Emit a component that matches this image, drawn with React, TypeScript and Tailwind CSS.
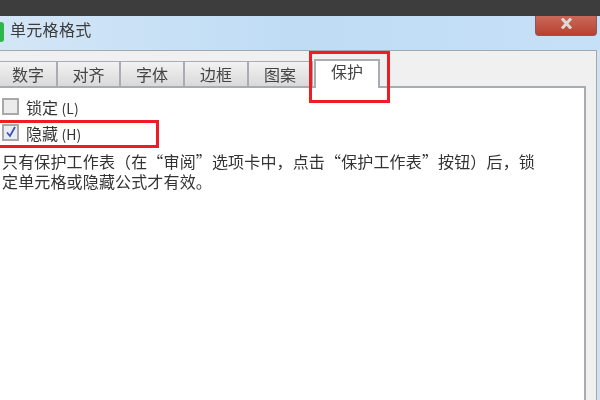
const cjk = "font-['Noto_Sans_CJK_SC','Liberation_Sans',sans-serif]";

const tabs = [
  { label: "数字", w: "w-[58px]" },
  { label: "对齐", w: "w-[63px]" },
  { label: "字体", w: "w-[64px]" },
  { label: "边框", w: "w-[64px]" },
  { label: "图案", w: "w-[64px]" },
];

export default function App() {
  return (
    <div className={`relative w-[600px] h-[400px] overflow-hidden bg-[#cfe3f5] ${cjk}`}>
      <div className="flex flex-col h-full blur-[0.6px]">
        <div className="h-[16px] shrink-0 bg-[#3d3d3d]" />

        {/* title bar */}
        <div className="relative h-[34px] shrink-0 flex items-center gap-[6px] bg-gradient-to-r from-[#d3e6f6] via-[#bfdcf5] to-[#c6e0f7]">
          <div className="w-[4px] h-[20px] mt-[-2px] rounded-r-[3px] bg-[#2fb84a]" />
          <span className="text-[16px] leading-[20px] mt-[-8px] tracking-[0.3px] text-[#3c3c3c]">单元格格式</span>
          <div className="absolute right-[3px] top-0 w-[62px] h-[20px] rounded-b-[4px] border border-t-0 border-[#8a5a50] bg-gradient-to-b from-[#c9695a] to-[#b8402f] flex items-start justify-center">
            <svg width="13" height="11" viewBox="0 0 13 11" className="mt-[2px]">
              <path d="M2 0.5 L11 10.5 M11 0.5 L2 10.5" stroke="#dcd9d6" strokeWidth="3" fill="none" />
            </svg>
          </div>
        </div>

        {/* dialog body */}
        <div className="flex-1 flex flex-col pt-[8px] pr-[10px] mr-[3px] bg-[#f0f0f0] border-t border-r border-[#a3a8ad]">
          <div className="flex items-end h-[27px] shrink-0 text-[16px] text-[#444444]">
            {tabs.map((t) => (
              <div
                key={t.label}
                className={`${t.w} h-[25px] flex items-center justify-center border-r-[2px] border-t border-[#a9adb1] bg-gradient-to-b from-[#f2f2f2] to-[#d9d9d9]`}
              >
                {t.label}
              </div>
            ))}
            <div className="w-[66px] h-[29px] ml-[1px] mb-[-2px] pb-[7px] z-10 flex items-center justify-center bg-white border-x-[2px] border-t-[2px] border-[#a9adb1]">
              保护
            </div>
          </div>

          <div className="flex-1 bg-white border-t-[2px] border-r-[2px] border-[#a9adb1] pt-[8px] text-[16px] leading-[20px] text-[#333333]">
            <div className="flex items-center h-[20px] pl-[2px] gap-[7px]">
              <span className="w-[17px] h-[17px] border-2 border-[#a8a8a8] bg-[#ececec]" />
              <span className="mt-[2px]">
                锁定 <span className="text-[14px]">(L)</span>
              </span>
            </div>
            <div className="flex items-center h-[20px] mt-[6px] pl-[2px] gap-[7px]">
              <span className="w-[17px] h-[17px] border-2 border-[#a8a8a8] bg-[#e8edf5] flex items-center justify-center">
                <svg width="12" height="12" viewBox="0 0 12 12">
                  <path d="M2 6.5 L5 10 L10 1" stroke="#3f51b0" strokeWidth="1.8" fill="none" />
                </svg>
              </span>
              <span className="mt-[3px]">
                隐藏 <span className="text-[14px]">(H)</span>
              </span>
            </div>
            <p className="mt-[9px] pl-[2px] w-[545px] tracking-[0.15px]">
              只有保护工作表（在“审阅”选项卡中，点击“保护工作表”按钮）后，锁定单元格或隐藏公式才有效。
            </p>
          </div>
        </div>
      </div>

      {/* red annotation boxes */}
      <div className="absolute left-[309px] top-[51px] w-[81px] h-[52px] border-[3px] border-[#ee1c25] blur-[0.4px]" />
      <div className="absolute left-[-3px] top-[120px] w-[162px] h-[28px] border-[3px] border-[#ee1c25] blur-[0.4px]" />
    </div>
  );
}
